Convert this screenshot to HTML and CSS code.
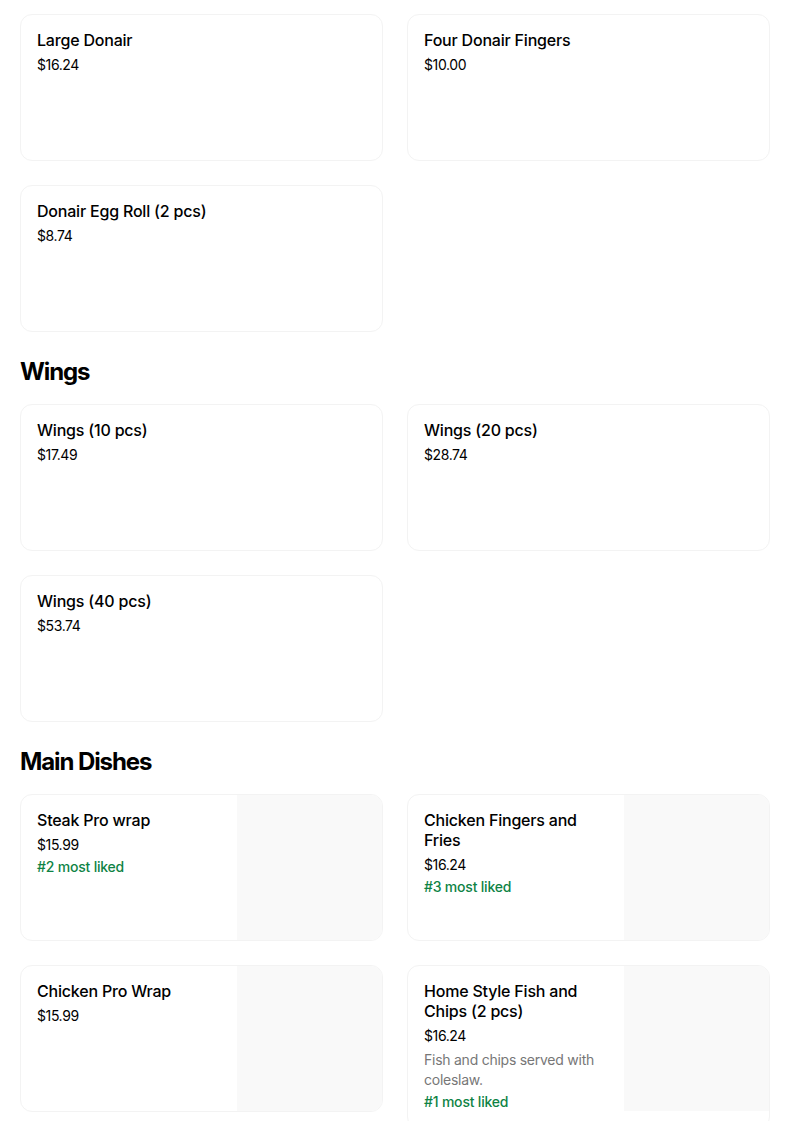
FILE: index.html
```html
<!DOCTYPE html>
<html lang="en">
<head>
<meta charset="utf-8">
<title>Menu</title>
<link rel="stylesheet" href="styles.css">
</head>
<body>
<main class="menu">
  <section class="section">
    <div class="grid">
      <article class="card"><div class="info"><h3 class="title">Large Donair</h3><p class="price">$16.24</p></div></article>
      <article class="card"><div class="info"><h3 class="title">Four Donair Fingers</h3><p class="price">$10.00</p></div></article>
      <article class="card"><div class="info"><h3 class="title">Donair Egg Roll (2 pcs)</h3><p class="price">$8.74</p></div></article>
    </div>
  </section>
  <section class="section">
    <h2 class="heading">Wings</h2>
    <div class="grid">
      <article class="card"><div class="info"><h3 class="title">Wings (10 pcs)</h3><p class="price">$17.49</p></div></article>
      <article class="card"><div class="info"><h3 class="title">Wings (20 pcs)</h3><p class="price">$28.74</p></div></article>
      <article class="card"><div class="info"><h3 class="title">Wings (40 pcs)</h3><p class="price">$53.74</p></div></article>
    </div>
  </section>
  <section class="section">
    <h2 class="heading">Main Dishes</h2>
    <div class="grid">
      <article class="card with-img"><div class="info"><h3 class="title">Steak Pro wrap</h3><p class="price">$15.99</p><p class="badge">#2 most liked</p></div><div class="thumb"></div></article>
      <article class="card with-img"><div class="info"><h3 class="title">Chicken Fingers and Fries</h3><p class="price">$16.24</p><p class="badge">#3 most liked</p></div><div class="thumb"></div></article>
      <article class="card with-img"><div class="info"><h3 class="title">Chicken Pro Wrap</h3><p class="price">$15.99</p></div><div class="thumb"></div></article>
      <article class="card with-img"><div class="info"><h3 class="title">Home Style Fish and Chips (2 pcs)</h3><p class="price">$16.24</p><p class="desc">Fish and chips served with coleslaw.</p><p class="badge">#1 most liked</p></div><div class="thumb"></div></article>
    </div>
  </section>
</main>
</body>
</html>
```
FILE: styles.css
```css
* { box-sizing: border-box; }
html, body { margin: 0; padding: 0; background: #fff; }
body {
  font-family: Inter, "Noto Sans", "Liberation Sans", sans-serif;
  color: #000;
}
.menu {
  width: 750px;
  margin-left: 20px;
  padding-top: 14px;
}
.heading {
  margin: 24px 0 16px;
  font-size: 24px;
  line-height: 32px;
  font-weight: 700;
  letter-spacing: -1.1px;
}
.grid {
  display: grid;
  grid-template-columns: 363px 363px;
  gap: 24px;
  align-items: start;
}
.card {
  display: flex;
  min-height: 147px;
  border: 1px solid #f3f3f3;
  border-radius: 12px;
  overflow: hidden;
  background: #fff;
}
.info {
  flex: 1;
  min-width: 0;
  padding: 15px 16px 16px 16px;
}
.thumb {
  flex: 0 0 145px;
  height: 145px;
  background: #f9f9f9;
}
.title {
  margin: 0;
  font-size: 16px;
  line-height: 20px;
  font-weight: 500;
  letter-spacing: -0.2px;
}
.price {
  margin: 5px 0 0;
  font-size: 14px;
  line-height: 20px;
  letter-spacing: -0.4px;
}
.desc {
  margin: 4px 0 0;
  font-size: 14px;
  line-height: 20px;
  color: #777;
  letter-spacing: -0.25px;
}
.badge {
  margin: 2px 0 0;
  font-size: 14px;
  line-height: 20px;
  font-weight: 500;
  color: #0e8345;
  letter-spacing: -0.2px;
}
```
